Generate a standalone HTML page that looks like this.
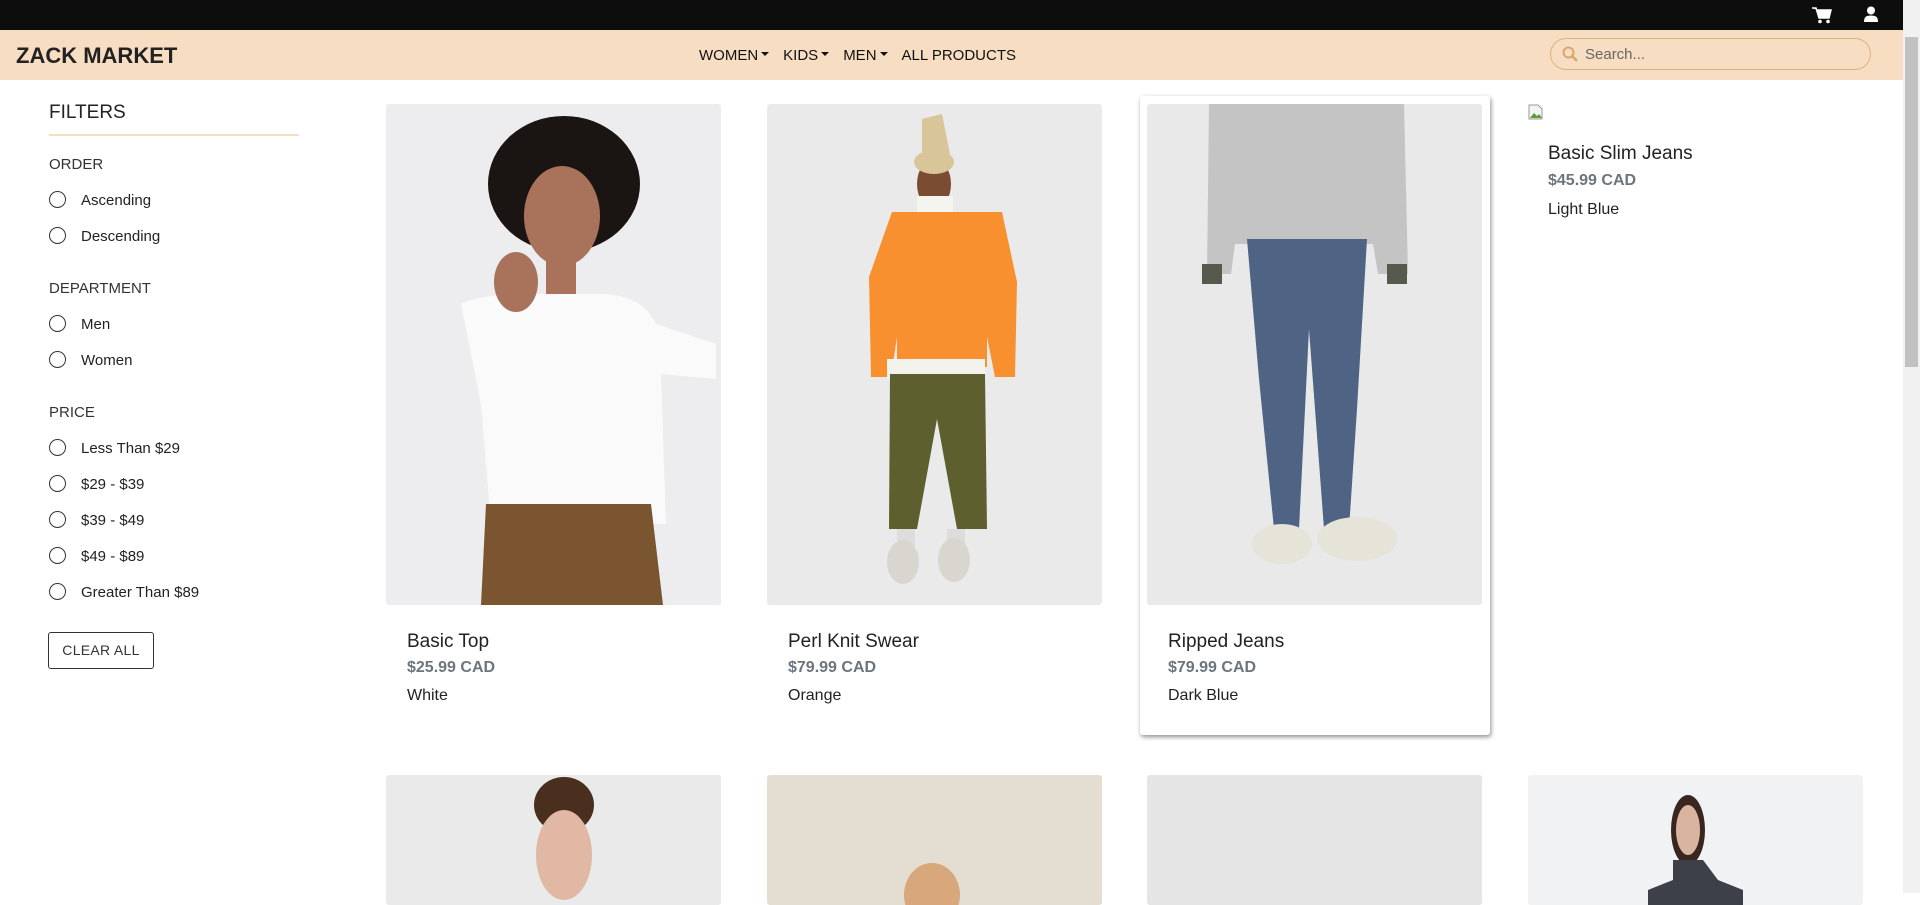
<!DOCTYPE html>
<html><head><meta charset="utf-8"><style>
*{box-sizing:border-box;margin:0;padding:0}
html,body{width:1920px;height:893px;overflow:hidden;background:#fff;font-family:"Liberation Sans",sans-serif;color:#212529}
.top{position:absolute;left:0;top:0;width:1903px;height:30px;background:#0d0d0d}
.nav{position:absolute;left:0;top:30px;width:1903px;height:50px;background:#f7dec2}
.logo{position:absolute;left:16px;top:13px;font-size:22px;font-weight:bold;color:#222;letter-spacing:0}
.links{position:absolute;left:699px;top:17px;font-size:15px;color:#111}
.links span{margin-right:14px}
.car{display:inline-block;border-left:4px solid transparent;border-right:4px solid transparent;border-top:4px solid #111;vertical-align:middle;margin-left:3px;position:relative;top:-2px}
.search{position:absolute;left:1550px;top:8px;width:321px;height:32px;border:1px solid #deb27c;border-radius:16px}
.search span{position:absolute;left:34px;top:7px;font-size:15px;color:#666}
.sb{position:absolute;right:0;top:0;width:17px;height:893px;background:#f1f1f1}
.sb div{position:absolute;left:2px;top:37px;width:13px;height:330px;background:#c1c1c1}
.f{position:absolute;left:49px}
.ft{top:102px;font-size:19px;color:#222}
.line{position:absolute;left:49px;top:134px;width:250px;height:2px;background:#f7dec2}
.h{font-size:15px;color:#333}
.r{font-size:15px;color:#222;padding-left:32px}
.r:before{content:"";position:absolute;left:0;top:-1px;width:15px;height:15px;border:1.5px solid #333;border-radius:50%}
.btn{position:absolute;left:48px;top:632px;width:106px;height:37px;border:1px solid #333;border-radius:3px;font-size:14px;text-align:center;line-height:35px;color:#333;letter-spacing:.3px}
.img{position:absolute;width:335px;height:501px;top:104px;border-radius:3px;background:#ebebeb;overflow:hidden}
.t{position:absolute;font-size:19px;color:#222}
.p{position:absolute;font-size:16px;font-weight:bold;color:#6c757d}
.c{position:absolute;font-size:16px;color:#222}
.img2{position:absolute;width:335px;top:775px;height:130px;border-radius:3px;overflow:hidden}
</style></head><body>
<div class="top">
<svg style="position:absolute;left:1812px;top:7px" width="20" height="17" viewBox="0 0 20 17"><path d="M0 1h4l3 10h10l2-8H5" fill="#fff" stroke="#fff" stroke-width="1.5"/><circle cx="8" cy="14.5" r="1.8" fill="#fff"/><circle cx="16" cy="14.5" r="1.8" fill="#fff"/></svg>
<svg style="position:absolute;left:1864px;top:6px" width="14" height="16" viewBox="0 0 14 16"><circle cx="7" cy="4.5" r="4" fill="#fff"/><path d="M0 16c0-5 2-6.5 7-6.5s7 1.5 7 6.5z" fill="#fff"/></svg>
</div>
<div class="nav">
<div class="logo">ZACK MARKET</div>
<div class="links"><span>WOMEN<i class="car"></i></span><span>KIDS<i class="car"></i></span><span>MEN<i class="car"></i></span><span>ALL PRODUCTS</span></div>
<div class="search"><svg style="position:absolute;left:11px;top:7px" width="16" height="16" viewBox="0 0 16 16"><circle cx="6.5" cy="6.5" r="5" fill="none" stroke="#dba56a" stroke-width="2"/><path d="M10 10l5 5" stroke="#dba56a" stroke-width="2.5"/></svg><span>Search...</span></div>
</div>
<div class="sb"><div></div></div>

<div class="f ft">FILTERS</div><div class="line"></div>
<div class="f h" style="top:156px">ORDER</div>
<div class="f r" style="top:192px">Ascending</div>
<div class="f r" style="top:228px">Descending</div>
<div class="f h" style="top:280px">DEPARTMENT</div>
<div class="f r" style="top:316px">Men</div>
<div class="f r" style="top:352px">Women</div>
<div class="f h" style="top:404px">PRICE</div>
<div class="f r" style="top:440px">Less Than $29</div>
<div class="f r" style="top:476px">$29 - $39</div>
<div class="f r" style="top:512px">$39 - $49</div>
<div class="f r" style="top:548px">$49 - $89</div>
<div class="f r" style="top:584px">Greater Than $89</div>
<div class="btn">CLEAR ALL</div>

<div style="position:absolute;left:1140px;top:96px;width:350px;height:639px;box-shadow:1px 2px 5px rgba(0,0,0,.45);border-radius:3px;background:#fff"></div>

<div class="img" style="left:386px;background:#ededef">
<svg width="335" height="501"><ellipse cx="178" cy="80" rx="76" ry="68" fill="#1a1412"/><ellipse cx="176" cy="112" rx="38" ry="50" fill="#a8735a"/><rect x="160" y="150" width="30" height="40" fill="#a8735a"/><path d="M75 200q20-10 70-10h70q40 0 55 30l60 20v35l-55 -5 5 150H105L95 300z" fill="#fafafa"/><path d="M100 400h165l12 101H95z" fill="#7b5430"/><ellipse cx="130" cy="178" rx="22" ry="30" fill="#a8735a"/></svg></div>
<div class="t" style="left:407px;top:631px">Basic Top</div><div class="p" style="left:407px;top:659px">$25.99 CAD</div><div class="c" style="left:407px;top:687px">White</div>

<div class="img" style="left:767px;background:#eaeaea">
<svg width="335" height="501"><path d="M155 15l20-5 8 40h-28z" fill="#d8c59a"/><ellipse cx="167" cy="80" rx="17" ry="25" fill="#7a4c32"/><ellipse cx="167" cy="58" rx="20" ry="12" fill="#d8c59a"/><rect x="150" y="92" width="36" height="22" fill="#f5f5f0"/><path d="M125 108h110l15 70-2 95h-20l-8-40v30h-90v-30l-6 40h-20l-2-100z" fill="#f8902f"/><rect x="120" y="255" width="98" height="20" fill="#f3f3ee"/><path d="M123 270h95l2 155h-30l-20-110-20 110h-28z" fill="#5e5f2e"/><rect x="130" y="425" width="18" height="20" fill="#ddd"/><rect x="180" y="425" width="18" height="20" fill="#ddd"/><ellipse cx="136" cy="458" rx="16" ry="22" fill="#d8d6cf"/><ellipse cx="187" cy="456" rx="16" ry="22" fill="#d8d6cf"/></svg></div>
<div class="t" style="left:788px;top:631px">Perl Knit Swear</div><div class="p" style="left:788px;top:659px">$79.99 CAD</div><div class="c" style="left:788px;top:687px">Orange</div>

<div class="img" style="left:1147px;background:#e9e9ea">
<svg width="335" height="501"><path d="M62 0h195l4 170h-30l-5-30H88l-4 30H60z" fill="#c4c4c4"/><rect x="55" y="160" width="20" height="20" fill="#555a4c"/><rect x="240" y="160" width="20" height="20" fill="#555a4c"/><path d="M100 135h120l-10 170-8 120h-25l-15-200-10 200h-25l-15-150z" fill="#4f6484"/><ellipse cx="135" cy="440" rx="30" ry="20" fill="#e6e3d8"/><ellipse cx="210" cy="435" rx="40" ry="22" fill="#e6e3d8"/></svg></div>
<div class="t" style="left:1168px;top:631px">Ripped Jeans</div><div class="p" style="left:1168px;top:659px">$79.99 CAD</div><div class="c" style="left:1168px;top:687px">Dark Blue</div>

<svg style="position:absolute;left:1528px;top:104px" width="16" height="16" viewBox="0 0 16 16"><path d="M1 1h9l4 4v10H1z" fill="#f3f3f3" stroke="#999"/><path d="M2 14l4-5 3 3 2-2 3 4z" fill="#5a9e3a"/></svg>
<div class="t" style="left:1548px;top:143px">Basic Slim Jeans</div><div class="p" style="left:1548px;top:172px">$45.99 CAD</div><div class="c" style="left:1548px;top:201px">Light Blue</div>

<div class="img2" style="left:386px;background:#eaeaea"><svg width="335" height="130"><ellipse cx="178" cy="30" rx="30" ry="28" fill="#4a2e1e"/><ellipse cx="178" cy="80" rx="28" ry="45" fill="#e1b8a4"/></svg></div>
<div class="img2" style="left:767px;background:#e3ded1"><svg width="335" height="130"><ellipse cx="165" cy="120" rx="28" ry="32" fill="#d8a87c"/></svg></div>
<div class="img2" style="left:1147px;background:#e5e5e5"></div>
<div class="img2" style="left:1528px;background:#f1f2f4"><svg width="335" height="130"><ellipse cx="160" cy="55" rx="17" ry="35" fill="#3a261e"/><ellipse cx="160" cy="55" rx="12" ry="25" fill="#d9b5a1"/><path d="M145 85h30l15 20 25 10v30H120v-30l25-10z" fill="#3d4048"/></svg></div>
</body></html>
